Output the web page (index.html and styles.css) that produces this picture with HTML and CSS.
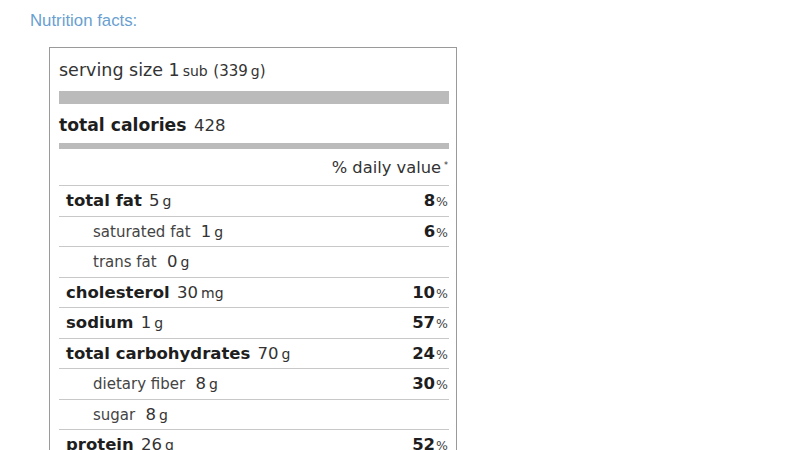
FILE: index.html
```html
<!DOCTYPE html>
<html>
<head>
<meta charset="utf-8">
<link rel="stylesheet" href="styles.css">
</head>
<body>
<div class="page">
  <div class="title">Nutrition facts:</div>
  <div class="label">
    <div class="serving">serving size <span class="num">1</span><span class="unit">sub</span> <span class="paren">(339<span class="unit">g</span>)</span></div>
    <div class="bar thick"></div>
    <div class="calories"><b>total calories</b> <span class="num">428</span></div>
    <div class="bar thin"></div>
    <div class="dv-head">% daily value<sup>*</sup></div>
    <div class="row main"><span class="name"><b>total fat</b> <span class="num">5</span><span class="unit">g</span></span><span class="pct"><b>8</b>%</span></div>
    <div class="row sub"><span class="name"><span class="sublabel">saturated fat</span> <span class="num">1</span><span class="unit">g</span></span><span class="pct"><b>6</b>%</span></div>
    <div class="row sub"><span class="name"><span class="sublabel">trans fat</span> <span class="num">0</span><span class="unit">g</span></span></div>
    <div class="row main"><span class="name"><b>cholesterol</b> <span class="num">30</span><span class="unit">mg</span></span><span class="pct"><b>10</b>%</span></div>
    <div class="row main"><span class="name"><b>sodium</b> <span class="num">1</span><span class="unit">g</span></span><span class="pct"><b>57</b>%</span></div>
    <div class="row main"><span class="name"><b>total carbohydrates</b> <span class="num">70</span><span class="unit">g</span></span><span class="pct"><b>24</b>%</span></div>
    <div class="row sub"><span class="name"><span class="sublabel">dietary fiber</span> <span class="num">8</span><span class="unit">g</span></span><span class="pct"><b>30</b>%</span></div>
    <div class="row sub"><span class="name"><span class="sublabel">sugar</span> <span class="num">8</span><span class="unit">g</span></span></div>
    <div class="row main"><span class="name"><b>protein</b> <span class="num">26</span><span class="unit">g</span></span><span class="pct"><b>52</b>%</span></div>
  </div>
</div>
</body>
</html>
```
FILE: styles.css
```css
html, body {
  margin: 0;
  padding: 0;
  background: #fff;
  overflow: hidden;
}
.page {
  padding: 12px 0 0 30px;
}
.title {
  font-family: "Liberation Sans", Arial, sans-serif;
  font-size: 16.8px;
  line-height: 18px;
  color: #6a9fd0;
}
.label {
  margin: 17px 0 0 19px;
  width: 390px;
  padding: 0 7px 20px 9px;
  border: 1px solid #9a9a9a;
  font-family: "DejaVu Sans", sans-serif;
  color: #333;
}
.serving {
  margin-top: 10px;
  height: 24px;
  line-height: 24px;
  font-size: 17.5px;
  color: #333;
}
.unit {
  font-size: 14px;
  margin-left: 3px;
}
.paren { font-size: 15px; }
.paren .unit { font-size: 14px; }
.bar { background: #bbb; }
.bar.thick { margin-top: 9px; height: 13px; }
.bar.thin { margin-top: 6px; height: 6px; }
.calories {
  margin-top: 9px;
  height: 24px;
  line-height: 24px;
  font-size: 17.2px;
}
.calories b { color: #1e1e1e; }
.calories .num { font-size: 16.5px; margin-left: 2px; }
.dv-head {
  height: 36px;
  display: flex;
  align-items: center;
  justify-content: flex-end;
  padding-right: 8px;
  font-size: 16.3px;
  color: #333;
  position: relative;
}
.dv-head sup {
  font-size: 8px;
  position: absolute;
  right: 1px;
  top: 12px;
}
.row {
  height: 29.5px;
  border-top: 1px solid #c8c8c8;
  display: flex;
  align-items: center;
  justify-content: space-between;
  padding-right: 1px;
  font-size: 16.5px;
}
.row.main { padding-left: 7px; }
.row.sub { padding-left: 34px; }
.row b { color: #1e1e1e; }
.row .num { margin-left: 2px; }
.sublabel {
  font-size: 15px;
  color: #444;
  margin-right: 3px;
}
.pct {
  font-size: 12.5px;
  color: #444;
}
.pct b {
  font-size: 16.5px;
  color: #1e1e1e;
  margin-right: 1px;
}
```
